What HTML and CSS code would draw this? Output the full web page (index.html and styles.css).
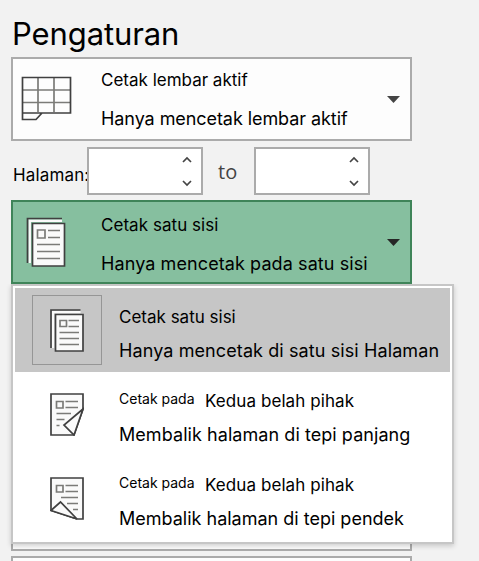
FILE: index.html
```html
<!DOCTYPE html>
<html lang="id">
<head>
<meta charset="utf-8">
<title>Pengaturan</title>
<link rel="stylesheet" href="styles.css">
</head>
<body>
<main class="panel">
  <h1 class="title">Pengaturan</h1>
  <section class="select">
    <svg class="icon" width="52" height="48" viewBox="0 0 52 48">
      <path class="line" d="M17 2V36M33 2V36M2 14H49M2 26.500H49"/>
      <path class="ink" d="M1.500 1.500H49.500V37H1.500ZM1.500 37V43.500H15L21 37"/>
    </svg>
    <div class="copy"><p class="name">Cetak lembar aktif</p><p class="desc sheet">Hanya mencetak lembar aktif</p></div>
    <i class="arrow"></i>
  </section>
  <section class="pages">
    <label class="pages-label">Halaman:</label>
    <div class="spin"><svg width="12" height="36" viewBox="0 0 12 36"><path d="M2 8L6 4L10 8M2 27L6 31L10 27"/></svg></div>
    <span class="to">to</span>
    <div class="spin"><svg width="12" height="36" viewBox="0 0 12 36"><path d="M2 8L6 4L10 8M2 27L6 31L10 27"/></svg></div>
  </section>
  <section class="select open">
    <svg class="icon doc" width="42" height="52" viewBox="0 0 42 52">
      <path class="halo" d="M3.700 46V3.700H36"/>
      <path class="ink" d="M1.500 46V1.500H36"/>
      <path class="paper" d="M6.500 6.500H38.500V49H6.500Z"/>
      <path class="line" d="M11.500 13H19V21H11.500ZM22 13.500H34M22 20.500H34M11 27.500H34M11 34.500H34M11 41.500H34"/>
    </svg>
    <div class="copy"><p class="name single">Cetak satu sisi</p><p class="desc one-side">Hanya mencetak pada satu sisi</p></div>
    <i class="arrow"></i>
  </section>
  <section class="select covered"></section>
  <section class="select last"></section>
  <div class="menu">
    <div class="item active">
      <div class="frame"><svg width="34" height="43" viewBox="0 0 34 43">
        <path class="halo" d="M3 39V3H30.500"/>
        <path class="ink" d="M1 39V1H30.500"/>
        <path class="paper" d="M5.500 5.500H33V42H5.500Z"/>
        <path class="line" d="M10 11.500H16.500V17.500H10ZM18.500 11.500H29M18.500 17.500H29M9.500 23.500H29M9.500 29.500H29M9.500 35.500H29"/>
      </svg></div>
      <div class="copy"><p class="name">Cetak satu sisi</p><p class="desc page-side">Hanya mencetak di satu sisi Halaman</p></div>
    </div>
    <div class="item">
      <div class="frame"><svg width="34" height="43" viewBox="0 0 34 43">
        <path class="paper" d="M1 1H33V16L24 42H1Z"/>
        <path class="line" d="M6.500 8.500H13V15H6.500ZM15.500 8.500H28M15.500 14.500H28M6.500 20.500H21M6.500 26.500H14.500M6.500 32.500H9.500"/>
        <path class="paper" d="M33 16L14 32L24 42Z"/>
      </svg></div>
      <div class="copy"><p class="name"><small>Cetak pada</small><span class="both">Kedua belah pihak</span></p><p class="desc long">Membalik halaman di tepi panjang</p></div>
    </div>
    <div class="item">
      <div class="frame"><svg width="34" height="43" viewBox="0 0 34 43">
        <path class="paper" d="M1 1H33V42H27L1 33.500Z"/>
        <path class="line" d="M6.500 8.500H13V15H6.500ZM15.500 8.500H28M15.500 14.500H28M11 20.500H28M17 26.500H28M23 32.500H28"/>
        <path class="paper" d="M1 33.500L10.500 25L27 42Z"/>
      </svg></div>
      <div class="copy"><p class="name"><small>Cetak pada</small><span class="both">Kedua belah pihak</span></p><p class="desc">Membalik halaman di tepi pendek</p></div>
    </div>
  </div>
</main>
</body>
</html>
```
FILE: styles.css
```css
* { box-sizing: border-box; }
body { margin: 0; background: #f2f2f2; color: #000; font: 17px/20px Inter, "Liberation Sans", sans-serif; }
p, h1 { margin: 0; white-space: nowrap; }
.panel { position: relative; height: 561px; padding: 12px 0 0 11px; overflow: hidden; }
.title { height: 45px; padding-left: 1px; font-size: 31px; line-height: 43px; font-weight: 400; letter-spacing: -.1px; }
.select { display: flex; width: 401px; height: 84px; border: 2px solid #ababab; background: #fdfdfd; }
.icon { flex: none; margin: 17px 0 0 8px; }
.select .copy { width: 275px; margin-left: 28px; padding-top: 11px; }
.icon.doc { margin: 15px 5px 0 13px; }
.name { height: 20px; }
.desc { height: 20px; margin-top: 19px; font-size: 18px; }
.arrow { width: 13px; height: 7px; margin: 37px 0 0 11px; background: #444; clip-path: polygon(0 0, 100% 0, 50% 100%); }
.pages { display: flex; height: 59px; padding-top: 6px; }
.pages-label { width: 76px; padding: 18px 0 0 2px; white-space: nowrap; letter-spacing: .15px; }
.spin { width: 116px; height: 48px; padding: 5px 8px 0 0; border: 2px solid #ababab; background: #fff; }
.spin svg { display: block; margin-left: auto; fill: none; stroke: #444; stroke-width: 1.7; }
.to { width: 51px; padding: 15px 0 0 15px; color: #444; font: 20px/20px "Open Sans", sans-serif; }
.open { border-color: #3f8459; background: #86bf9f; }
.select.open .copy { padding-top: 13px; }
.open .arrow { background: #262626; }
.covered { height: 262px; margin-top: 5px; }
.last { margin-top: 5px; }
.menu { position: absolute; left: 11px; top: 284px; width: 443px; height: 260px; padding: 2px; border: 2px solid #c6c6c6; background: #fff; box-shadow: 0 2px 5px rgba(0, 0, 0, .18); clip-path: inset(0 -8px -8px -8px); }
.item { display: flex; height: 84px; padding: 7px 0 0 17px; }
.active { background: #c6c6c6; }
.frame { width: 70px; height: 70px; padding: 13px 0 0 17px; border: 1px solid transparent; }
.active .frame { border-color: #969696; }
.frame svg { display: block; }
.item .copy { margin-left: 17px; padding-top: 12px; }
.item .desc { margin-top: 14px; }
.item small { display: inline-block; width: 86px; font-size: 14px; position: relative; top: -3px; }
.both { letter-spacing: .08px; }
.sheet { letter-spacing: -.07px; }
.single { letter-spacing: .05px; }
.one-side { letter-spacing: .09px; }
.page-side { letter-spacing: .1px; }
.long { letter-spacing: .06px; }
.ink { fill: none; stroke: #404040; stroke-width: 1.7; }
.paper { fill: #fafafa; stroke: #404040; stroke-width: 1.7; }
.line { fill: none; stroke: #7b7b78; stroke-width: 1.7; }
.halo { fill: none; stroke: #fafafa; stroke-width: 2.500; }
```
